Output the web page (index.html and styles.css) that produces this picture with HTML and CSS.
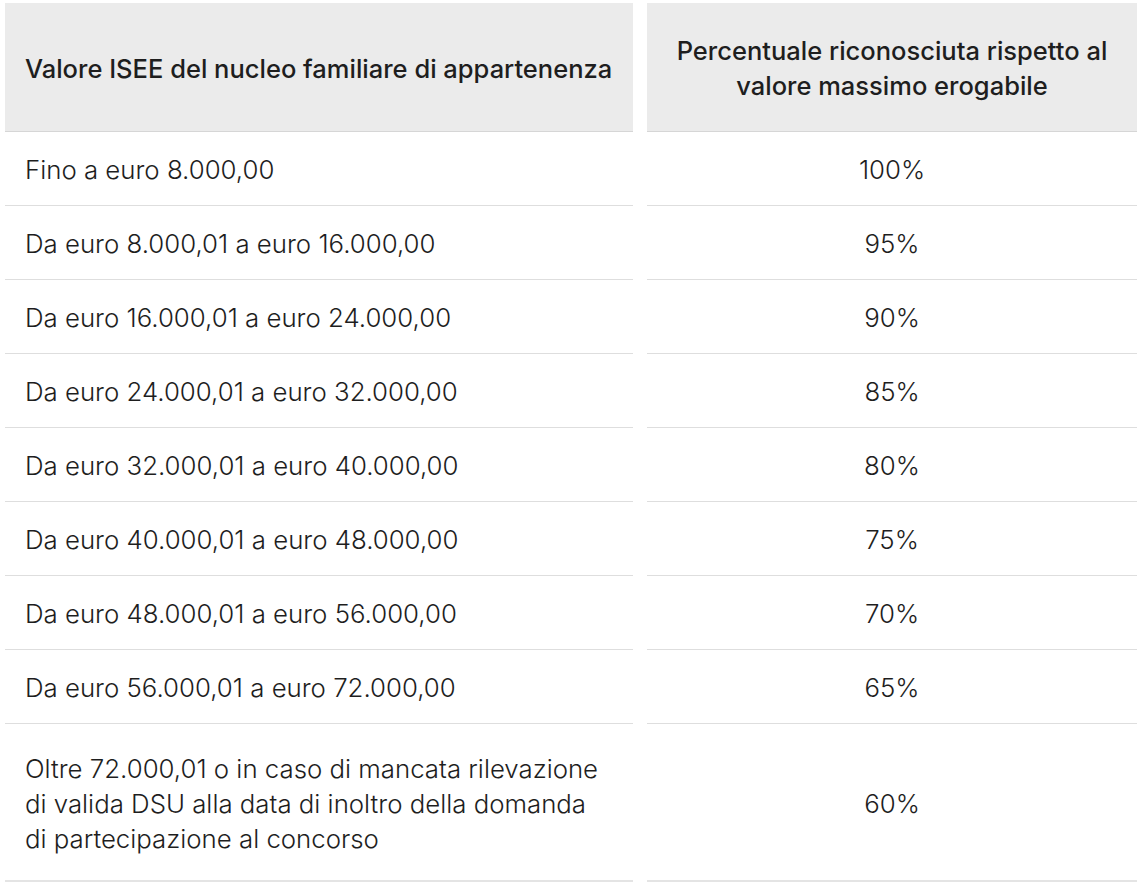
FILE: index.html
```html
<!DOCTYPE html>
<html lang="it">
<head>
<meta charset="utf-8">
<link rel="stylesheet" href="styles.css">
</head>
<body>
<div class="table">
  <div class="cell head left">Valore ISEE del nucleo familiare di appartenenza</div>
  <div class="cell head center">Percentuale riconosciuta rispetto al<br>valore massimo erogabile</div>

  <div class="cell left">Fino a euro 8.000,00</div>
  <div class="cell center">100%</div>

  <div class="cell left">Da euro 8.000,01 a euro 16.000,00</div>
  <div class="cell center">95%</div>

  <div class="cell left">Da euro 16.000,01 a euro 24.000,00</div>
  <div class="cell center">90%</div>

  <div class="cell left">Da euro 24.000,01 a euro 32.000,00</div>
  <div class="cell center">85%</div>

  <div class="cell left">Da euro 32.000,01 a euro 40.000,00</div>
  <div class="cell center">80%</div>

  <div class="cell left">Da euro 40.000,01 a euro 48.000,00</div>
  <div class="cell center">75%</div>

  <div class="cell left">Da euro 48.000,01 a euro 56.000,00</div>
  <div class="cell center">70%</div>

  <div class="cell left">Da euro 56.000,01 a euro 72.000,00</div>
  <div class="cell center">65%</div>

  <div class="cell left last">Oltre 72.000,01 o in caso di mancata rilevazione<br>di valida DSU alla data di inoltro della domanda<br>di partecipazione al concorso</div>
  <div class="cell center last">60%</div>
</div>
</body>
</html>
```

FILE: styles.css
```css
html, body {
  margin: 0;
  padding: 0;
  background: #ffffff;
}

body {
  font-family: "Inter", "Liberation Sans", sans-serif;
  color: #1e1e1e;
  font-size: 25.8px;
  font-weight: 300;
  line-height: 35px;
}

.table {
  display: grid;
  grid-template-columns: 628px 490px;
  column-gap: 14px;
  padding: 3px 5px 0 5px;
}

.cell {
  display: flex;
  align-items: center;
  min-height: 35px;
  padding: 20px 20px 18px 20px;
  border-bottom: 1px solid #dedede;
}

.cell.left {
  justify-content: flex-start;
}

.cell.center {
  justify-content: center;
  text-align: center;
}

.cell.head {
  background: #ebebeb;
  font-size: 25.5px;
  font-weight: 500;
  padding-top: 30px;
  padding-bottom: 28px;
  min-height: 70px;
  border-bottom: 1px solid #d6d6d6;
}

.cell.last {
  padding-top: 27px;
  padding-bottom: 24px;
  border-bottom: 2px solid #e4e4e4;
}
```
